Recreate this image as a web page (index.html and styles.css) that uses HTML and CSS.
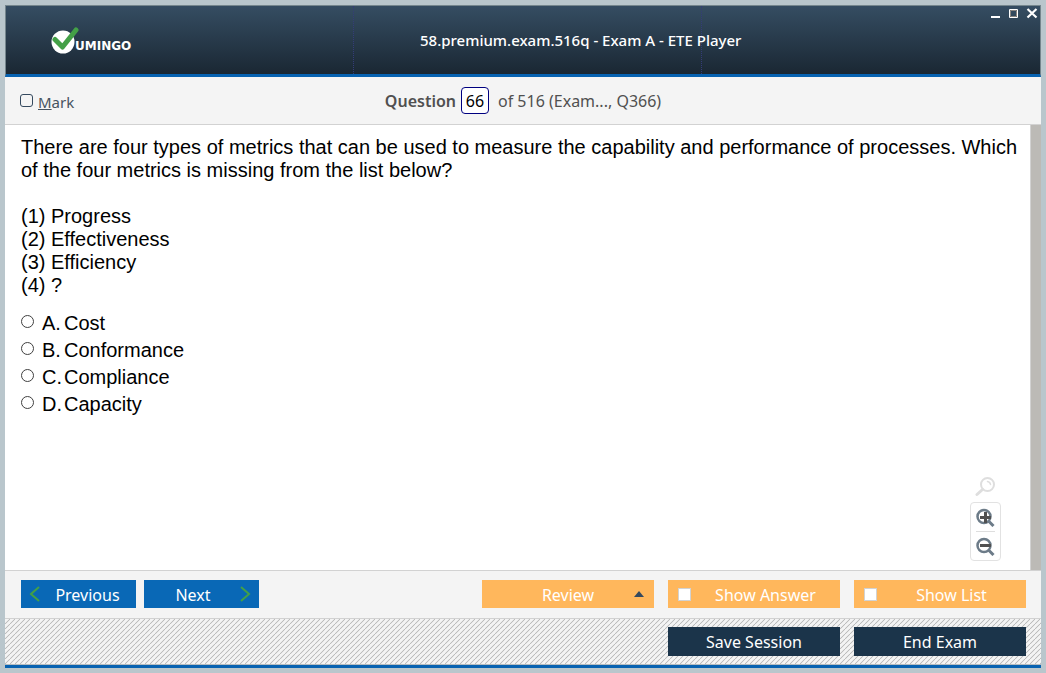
FILE: index.html
```html
<!DOCTYPE html>
<html lang="en">
<head>
<meta charset="utf-8">
<title>58.premium.exam.516q - Exam A - ETE Player</title>
<link rel="stylesheet" href="styles.css">
</head>
<body>
<div class="window">
  <header class="titlebar">
    <div class="brand">
      <svg class="brand-mark" width="28" height="27" viewBox="0 0 28 27" aria-hidden="true">
        <circle cx="12" cy="15" r="11.5" fill="#fff"/>
        <path d="M4 12.5 11.5 20 25 3" fill="none" stroke="#43a047" stroke-width="5" stroke-linecap="round" stroke-linejoin="round"/>
      </svg>
      <span class="brand-name">UMINGO</span>
    </div>
    <div class="divider"></div>
    <h1 class="title">58.premium.exam.516q - Exam A - ETE Player</h1>
    <div class="controls">
      <button class="control" aria-label="Minimize"><svg width="12" height="12" viewBox="0 0 12 12"><path d="M1 9h9v2H1z" fill="#fff"/></svg></button>
      <button class="control" aria-label="Maximize"><svg width="12" height="12" viewBox="0 0 12 12"><path d="M1.5 2.5h8v8h-8z" fill="none" stroke="#fff"/><path d="M2.5 3.5h6v6h-6z" fill="none" stroke="#8a8580"/></svg></button>
      <button class="control" aria-label="Close"><svg width="12" height="12" viewBox="0 0 12 12"><path d="M1.500 2 10.500 10.500M10.500 2 1.500 10.500" stroke="#fff" stroke-width="2.200"/></svg></button>
    </div>
  </header>

  <div class="infobar">
    <label class="mark"><input class="mark-box" type="checkbox"><span><u>M</u>ark</span></label>
    <div class="position">
      <label class="position-label" for="number">Question</label>
      <input class="number" id="number" type="text" value="66">
      <span class="total">of 516 (Exam..., Q366)</span>
    </div>
  </div>

  <main class="content">
    <div class="question">
      <p class="prompt">There are four types of metrics that can be used to measure the capability and performance of processes. Which of the four metrics is missing from the list below?</p>
      <p class="metrics">(1) Progress<br>(2) Effectiveness<br>(3) Efficiency<br>(4) ?</p>
      <div class="answers">
        <label class="answer"><input class="choice" type="radio" name="answer"><span class="letter">A.</span><span>Cost</span></label>
        <label class="answer"><input class="choice" type="radio" name="answer"><span class="letter">B.</span><span>Conformance</span></label>
        <label class="answer"><input class="choice" type="radio" name="answer"><span class="letter">C.</span><span>Compliance</span></label>
        <label class="answer"><input class="choice" type="radio" name="answer"><span class="letter">D.</span><span>Capacity</span></label>
      </div>
    </div>
    <div class="zoom">
      <svg width="22" height="22" viewBox="0 0 22 22" aria-hidden="true"><g fill="none" stroke="#dedede" stroke-linecap="round"><circle cx="12.500" cy="8.500" r="6.500" stroke-width="2"/><path d="M7.500 13.500 2 18.500" stroke-width="3"/><path d="M12.500 5.500a3.500 3.500 0 0 1 3 3" stroke-width="1.500"/></g></svg>
      <div class="zoom-panel">
        <button class="zoom-button" aria-label="Zoom in"><svg width="20" height="20" viewBox="0 0 20 20"><circle cx="8" cy="9.500" r="6.500" fill="none" stroke="#6c7b88" stroke-width="2.500"/><path d="M12.500 14 17.500 19" stroke="#6c7b88" stroke-width="3"/><path d="M9.500 5v11M4 10.500h11" stroke="#505050" stroke-width="3"/></svg></button>
        <button class="zoom-button" aria-label="Zoom out"><svg width="20" height="20" viewBox="0 0 20 20"><circle cx="8" cy="9.500" r="6.500" fill="none" stroke="#6c7b88" stroke-width="2.500"/><path d="M12.500 14 17.500 19" stroke="#6c7b88" stroke-width="3"/><path d="M4 9.500h11" stroke="#505050" stroke-width="3"/></svg></button>
      </div>
    </div>
    <div class="scrollbar"></div>
  </main>

  <nav class="actions">
    <button class="button step previous"><svg width="12" height="16" viewBox="0 0 12 16" aria-hidden="true"><path d="M10 1 2 8l8 7" fill="none" stroke="#43a047" stroke-width="2"/></svg><span class="text">Previous</span></button>
    <button class="button step next"><span class="text">Next</span><svg width="12" height="16" viewBox="0 0 12 16" aria-hidden="true"><path d="M2 1l8 7-8 7" fill="none" stroke="#43a047" stroke-width="2"/></svg></button>
    <button class="button option review"><span class="text">Review</span><svg width="10" height="6" viewBox="0 0 10 6" aria-hidden="true"><path d="M0 6 5 0l5 6z" fill="#34495e"/></svg></button>
    <label class="button option"><input class="tick" type="checkbox"><span class="text">Show Answer</span></label>
    <label class="button option"><input class="tick" type="checkbox"><span class="text">Show List</span></label>
  </nav>
  <footer class="session">
    <button class="button dark">Save Session</button>
    <button class="button dark">End Exam</button>
  </footer>
</div>
</body>
</html>
```

FILE: styles.css
```css
* { box-sizing: border-box; }
body {
  margin: 0;
  min-height: 100vh;
  padding: 5px;
  display: flex;
  background: #b9c6cc;
  font-family: "Noto Sans", "Open Sans", sans-serif;
  font-size: 16px;
}
button, input { margin: 0; font: inherit; }
button { padding: 0; border: 0; background: none; }
svg { display: block; flex: none; }
p, h1 { margin: 0; }

.window {
  flex: 1;
  min-width: 0;
  display: flex;
  flex-direction: column;
  border-bottom: 3px solid #0762b1;
  background: #f4f4f4;
}
.titlebar {
  height: 72px;
  display: grid;
  grid-template-columns: 348px 348px 1fr;
  grid-template-rows: 100%;
  align-items: center;
  border: 1px solid #75868d;
  border-bottom: 3px solid #0762b1;
  background: linear-gradient(#354d62, #1a2733);
  color: #fff;
}
.brand, .divider {
  height: 100%;
  border-right: 1px dotted #343c78;
}
.brand {
  padding-left: 45px;
  display: flex;
  align-items: center;
}
.brand-name {
  margin-left: -4px;
  padding-top: 11px;
  font: bold 12px/14px "DejaVu Sans", sans-serif;
}
.divider, .title { grid-row: 1; }
.divider { grid-column: 2; }
.title {
  grid-column: 2 / 4;
  padding-left: 66px;
  font-size: 15px;
  font-weight: 500;
  white-space: nowrap;
}
.controls {
  grid-area: 1 / 3;
  align-self: start;
  display: flex;
  justify-content: flex-end;
  gap: 6px;
  padding: 1px 2px;
}
.control { width: 12px; height: 12px; }
.infobar {
  height: 48px;
  display: grid;
  grid-template-columns: 1fr auto 1fr;
  align-items: center;
  padding: 0 15px;
  border-bottom: 1px solid #d2d2d2;
  color: #505050;
}
.mark { display: flex; align-items: center; gap: 5px; color: #46535f; font-size: 15px; }
.mark span { padding-top: 2px; }
.mark-box {
  appearance: none;
  width: 13px;
  height: 13px;
  border: 1px solid #34495e;
  border-radius: 3px;
}
.position { display: flex; align-items: center; gap: 5px; }
.position-label { font-weight: 600; }
.total { padding-left: 4px; }
.number {
  width: 28px;
  height: 27px;
  padding: 0;
  border: 1px solid #000080;
  border-radius: 4px;
  background: #fff;
  color: #000;
  text-align: center;
}
.content {
  flex: 1;
  display: flex;
  position: relative;
  background: #fff;
  border-bottom: 1px solid #d2d2d2;
  color: #000;
  font: 20px/23px "Liberation Sans", Arial, sans-serif;
}
.question { flex: 1; padding: 11px 4px 0 16px; }
.metrics { margin-top: 23px; }
.answers { margin-top: 13px; }
.answer { display: flex; align-items: center; height: 27px; }
.choice {
  appearance: none;
  width: 13px;
  height: 13px;
  margin: 0 8px 4px 0;
  border: 1px solid #404040;
  border-radius: 50%;
  background: #fff;
}
.letter { width: 22px; }
.scrollbar { width: 11px; background: #bcbab6; border-left: 1px solid #d2d2d2; }
.zoom {
  position: absolute;
  right: 40px;
  bottom: 9px;
  display: flex;
  flex-direction: column;
  align-items: center;
  gap: 4px;
}
.zoom-panel {
  width: 31px;
  padding: 0 5px;
  border: 1px solid #e2e2e2;
  border-radius: 4px;
  background: #fff;
}
.zoom-button { width: 100%; height: 28px; display: grid; place-items: center; }
.zoom-button + .zoom-button { height: 29px; border-top: 1px solid #dedede; }

.actions {
  height: 48px;
  display: flex;
  align-items: center;
  padding: 0 15px 1px 16px;
  border-bottom: 1px solid #d2d2d2;
}
.button {
  height: 28px;
  display: flex;
  align-items: center;
  justify-content: center;
  color: #fff;
}
.text { flex: 1; padding-top: 1px; text-align: center; }
.step { width: 115px; margin-right: 8px; padding: 0 8px; background: #0968b6; }
.previous .text { padding-left: 6px; }
.next .text { padding-right: 5px; }
.option, .dark { width: 172px; margin-left: 14px; }
.option { padding: 0 10px; background: #ffb75c; }
.option .text { padding-left: 10px; }
.review { margin-left: auto; }
.tick {
  appearance: none;
  width: 13px;
  height: 13px;
  border: 1px solid #d2d2d2;
  background: #fff;
}
.session {
  height: 46px;
  display: flex;
  align-items: center;
  justify-content: flex-end;
  padding-right: 15px;
  border-bottom: 1px solid #b4bcc0;
  background: linear-gradient(to bottom right, #f4f4f4 38%, #bdbdbd 50%, #f4f4f4 62%) 0 0 / 5px 5px;
}
.dark { height: 29px; background: #1b344a; }
```
